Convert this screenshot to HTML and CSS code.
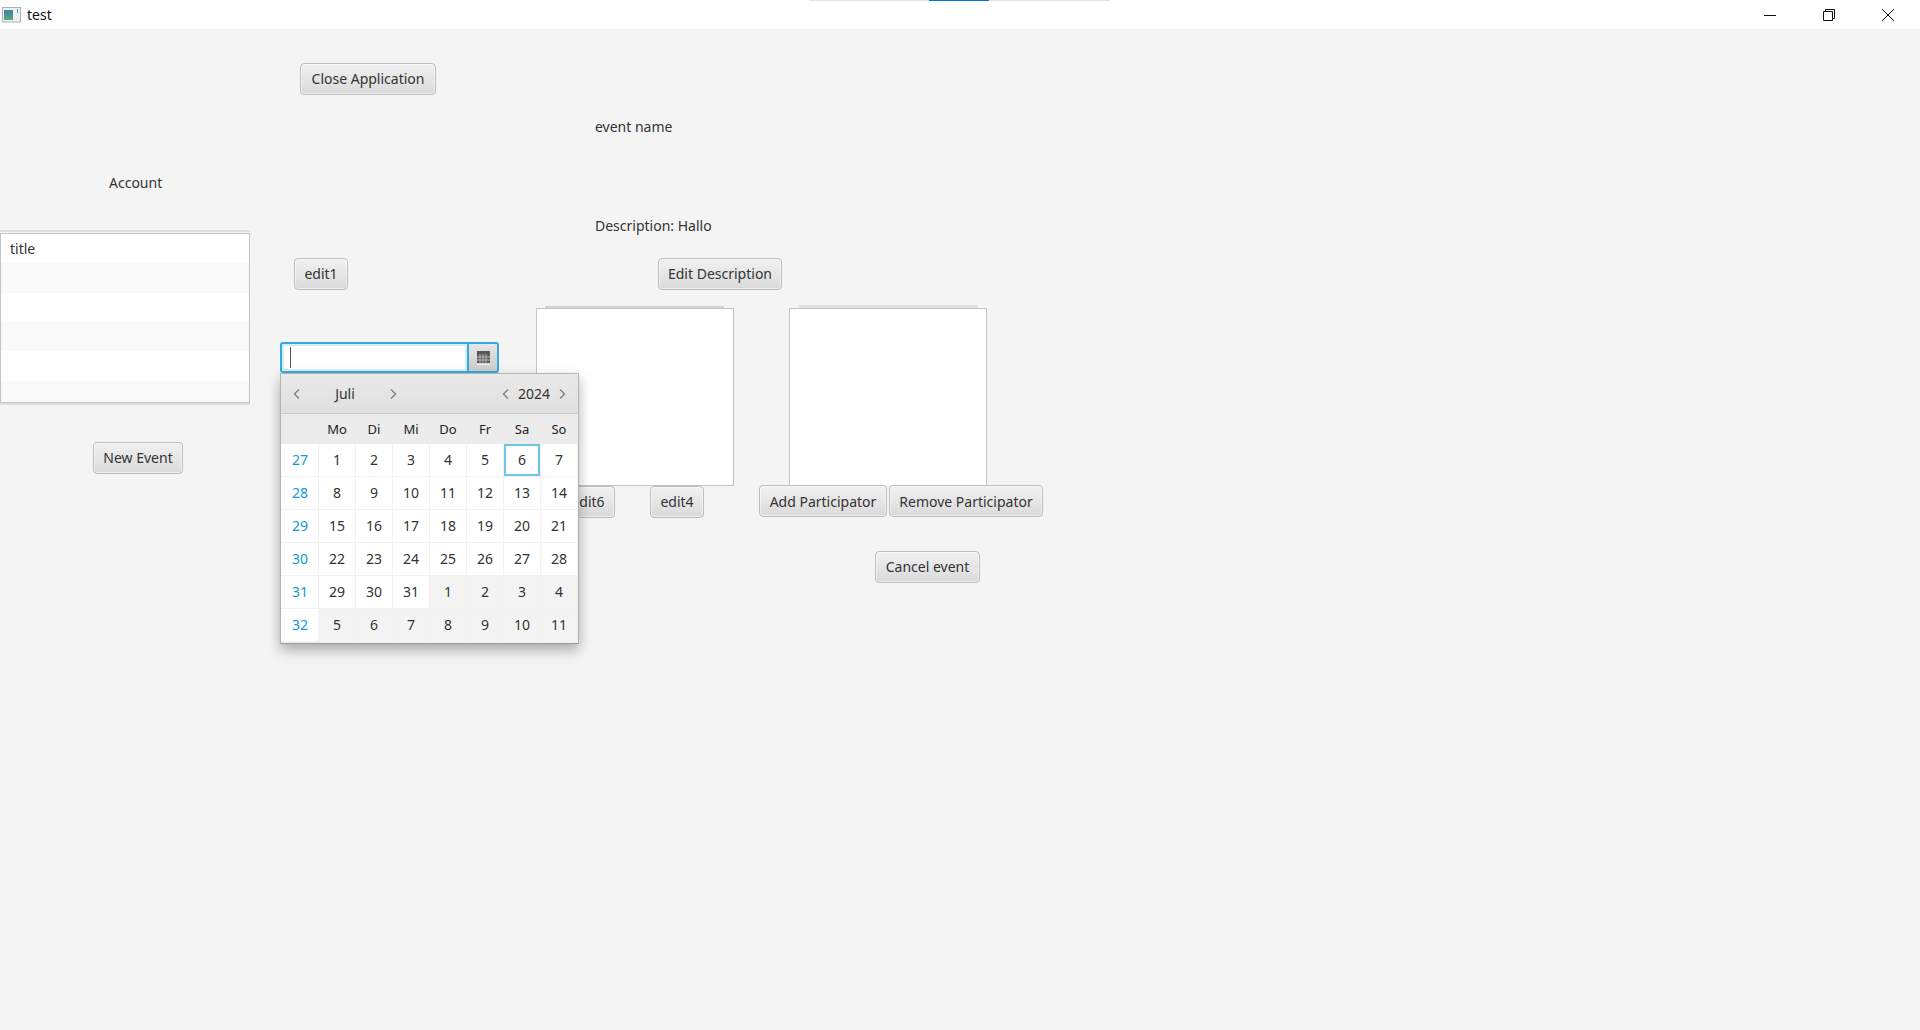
FILE: index.html
```html
<!DOCTYPE html>
<html lang="en">
<head>
    <meta charset="UTF-8">
    <meta name="viewport" content="width=device-width, initial-scale=1.0">
    <title>test</title>
    <link rel="stylesheet" href="styles.css">
</head>
<body>
    <header class="title-bar">
        <svg class="app-icon" width="20" height="16" viewBox="0 0 20 16">
            <defs>
                <linearGradient id="appFill" x1="0" y1="0" x2="0" y2="1">
                    <stop offset="0" stop-color="#3f7f9c"/>
                    <stop offset="1" stop-color="#62a886"/>
                </linearGradient>
            </defs>
            <rect x="0.5" y="0.5" width="18" height="14.5" fill="#eef1f1" stroke="#a9b2b8"/>
            <rect x="2" y="3" width="9" height="10" fill="url(#appFill)"/>
            <rect x="15" y="2" width="1" height="4" fill="#4f9fb0"/>
        </svg>
        <span class="app-title">test</span>
        <div class="window-controls">
            <button class="win-btn" type="button" aria-label="Minimize">
                <svg width="14" height="14" viewBox="0 0 14 14"><path d="M1 7.5h12" stroke="#111" fill="none"/></svg>
            </button>
            <button class="win-btn" type="button" aria-label="Restore">
                <svg width="14" height="14" viewBox="0 0 14 14"><path d="M1.5 3.5h9v9h-9zM3.5 3.5v-2h9v9h-2" stroke="#111" fill="none"/></svg>
            </button>
            <button class="win-btn" type="button" aria-label="Close">
                <svg width="14" height="14" viewBox="0 0 14 14"><path d="M1 1l12 12M13 1L1 13" stroke="#111" fill="none"/></svg>
            </button>
        </div>
        <div class="load-bar"><div class="load-bar-fill"></div></div>
    </header>

    <main class="content">
        <section class="col col-account">
            <div class="label account-label">Account</div>
            <div class="list-box">
                <ul class="list-view events-list">
                    <li>title</li>
                    <li></li>
                    <li></li>
                    <li></li>
                    <li></li>
                    <li></li>
                </ul>
            </div>
            <button class="fx-btn new-event" type="button">New Event</button>
        </section>

        <section class="col col-date">
            <button class="fx-btn close-app" type="button">Close Application</button>
            <button class="fx-btn edit1" type="button">edit1</button>
            <div class="date-picker">
                <div class="date-input"><span class="caret"></span></div>
                <div class="date-button">
                    <svg width="13" height="14" viewBox="0 0 13 14">
                        <rect x="0" y="0" width="13" height="3" fill="#555"/>
                        <rect x="0" y="3" width="13" height="9" fill="#5c5c5c"/>
                        <path d="M3 3v9M6 3v9M9 3v9M0 6h13M0 9h13" stroke="#b9b9b9" fill="none"/>
                        <rect x="0" y="13" width="13" height="1" fill="#f0f0f0"/>
                    </svg>
                </div>

                <div class="calendar">
                    <div class="cal-header">
                        <div class="spinner month-spinner">
                            <svg class="chev" width="7" height="10" viewBox="0 0 7 10"><path d="M6 .5L1.5 5 6 9.5"/></svg>
                            <span>Juli</span>
                            <svg class="chev" width="7" height="10" viewBox="0 0 7 10"><path d="M1 .5L5.500 5 1 9.500"/></svg>
                        </div>
                        <div class="spinner year-spinner">
                            <svg class="chev" width="7" height="10" viewBox="0 0 7 10"><path d="M6 .5L1.5 5 6 9.5"/></svg>
                            <span>2024</span>
                            <svg class="chev" width="7" height="10" viewBox="0 0 7 10"><path d="M1 .5L5.500 5 1 9.500"/></svg>
                        </div>
                    </div>
                    <div class="cal-grid">
                        <div class="dow"></div><div class="dow">Mo</div><div class="dow">Di</div><div class="dow">Mi</div><div class="dow">Do</div><div class="dow">Fr</div><div class="dow">Sa</div><div class="dow">So</div>

                        <div class="cell week">27</div><div class="cell">1</div><div class="cell">2</div><div class="cell">3</div><div class="cell">4</div><div class="cell">5</div><div class="cell today">6</div><div class="cell">7</div>
                        <div class="cell week">28</div><div class="cell">8</div><div class="cell">9</div><div class="cell">10</div><div class="cell">11</div><div class="cell">12</div><div class="cell">13</div><div class="cell">14</div>
                        <div class="cell week">29</div><div class="cell">15</div><div class="cell">16</div><div class="cell">17</div><div class="cell">18</div><div class="cell">19</div><div class="cell">20</div><div class="cell">21</div>
                        <div class="cell week">30</div><div class="cell">22</div><div class="cell">23</div><div class="cell">24</div><div class="cell">25</div><div class="cell">26</div><div class="cell">27</div><div class="cell">28</div>
                        <div class="cell week">31</div><div class="cell">29</div><div class="cell">30</div><div class="cell">31</div><div class="cell other">1</div><div class="cell other">2</div><div class="cell other">3</div><div class="cell other">4</div>
                        <div class="cell week">32</div><div class="cell other">5</div><div class="cell other">6</div><div class="cell other">7</div><div class="cell other">8</div><div class="cell other">9</div><div class="cell other">10</div><div class="cell other">11</div>
                    </div>
                </div>
            </div>
        </section>

        <section class="col col-event">
            <div class="label event-name">event name</div>
            <div class="label description">Description: Hallo</div>
            <button class="fx-btn edit-description" type="button">Edit Description</button>
            <div class="list-edge edge-dark"></div>
            <div class="list-view square-list"></div>
            <div class="btn-row">
                <button class="fx-btn edit6" type="button">edit6</button>
                <button class="fx-btn edit4" type="button">edit4</button>
            </div>
        </section>

        <section class="col col-people">
            <div class="list-edge edge-light"></div>
            <div class="list-view people-list"></div>
            <div class="btn-row people-buttons">
                <button class="fx-btn" type="button">Add Participator</button>
                <button class="fx-btn" type="button">Remove Participator</button>
            </div>
            <button class="fx-btn cancel-event" type="button">Cancel event</button>
        </section>
    </main>
</body>
</html>
```
FILE: styles.css
```css
* {
    box-sizing: border-box;
}

html,
body {
    height: 100%;
}

body {
    margin: 0;
    background-color: #f4f4f4;
    color: #333;
    font-family: "Noto Sans", "Open Sans", Arial, sans-serif;
    font-size: 14px;
    overflow: hidden;
}

/* window title bar */
.title-bar {
    position: relative;
    display: flex;
    align-items: center;
    height: 29px;
    background-color: #fff;
}

.app-icon {
    margin-left: 2px;
    margin-top: 1px;
}

.app-title {
    margin-left: 5px;
    color: #111;
}

.window-controls {
    display: flex;
    margin-left: auto;
    margin-right: 3px;
}

.win-btn {
    display: flex;
    align-items: center;
    justify-content: center;
    width: 59px;
    height: 29px;
    padding: 0;
    border: 0;
    background: none;
}

.load-bar {
    position: absolute;
    top: 0;
    left: 809px;
    width: 301px;
    height: 1px;
    background-color: #e2e2e2;
}

.load-bar-fill {
    width: 60px;
    height: 1px;
    margin-left: 120px;
    background-color: #0078d7;
}

/* main area, four columns */
.content {
    display: flex;
    align-items: flex-start;
    padding-top: 1px;
}

.col {
    display: flex;
    flex-direction: column;
    align-items: flex-start;
    flex: none;
}

.col-account {
    width: 280px;
}

.col-date {
    width: 256px;
}

.col-event {
    width: 223px;
}

.col-people {
    width: 300px;
    padding-top: 275px;
}

.label {
    height: 20px;
    line-height: 20px;
    white-space: nowrap;
}

.fx-btn {
    height: 32px;
    padding: 0 0 2px;
    border: 1px solid #bdbdbd;
    border-radius: 4px;
    background: linear-gradient(#f1f1f1, #dadada);
    box-shadow: inset 0 0 0 1px rgba(255, 255, 255, 0.55);
    color: #333;
    font-family: inherit;
    font-size: 14px;
    white-space: nowrap;
    cursor: pointer;
}

/* left column */
.account-label {
    margin-top: 143px;
    margin-left: 109px;
}

.list-box {
    width: 250px;
    margin-top: 37px;
    padding-top: 1px;
    border-top: 2px solid #dedede;
    border-bottom: 2px solid #dedede;
}

.list-view {
    margin: 0;
    padding: 0;
    list-style: none;
    border: 1px solid #c4c4c4;
    background-color: #fff;
}

.events-list {
    height: 170px;
    overflow: hidden;
}

.events-list li {
    height: 29.33px;
    padding-left: 9px;
    line-height: 30px;
}

.events-list li:nth-child(even) {
    background-color: #f9f9f9;
}

.new-event {
    margin-top: 37px;
    margin-left: 93px;
    width: 90px;
}

/* date column */
.close-app {
    margin-top: 33px;
    margin-left: 20px;
    width: 136px;
}

.edit1 {
    margin-top: 163px;
    margin-left: 14px;
    width: 54px;
}

.date-picker {
    position: relative;
    display: flex;
    width: 219px;
    height: 31px;
    margin-top: 52px;
}

.date-input {
    width: 187px;
    padding: 2px 0 0 8px;
    border: 2px solid #35abd9;
    border-right: 0;
    border-radius: 3px 0 0 3px;
    background-color: #fff;
    box-shadow: inset 0 0 0 2px #d3edf7;
}

.caret {
    display: block;
    width: 1px;
    height: 21px;
    margin-top: 1px;
    background-color: #555;
}

.date-button {
    display: flex;
    align-items: center;
    justify-content: center;
    width: 32px;
    border: 2px solid #35abd9;
    border-radius: 0 3px 3px 0;
    background: linear-gradient(#e6e6e6, #cbcbcb);
}

/* calendar popup, hangs over the next column */
.calendar {
    position: absolute;
    top: 31px;
    left: 0;
    z-index: 5;
    width: 299px;
    border: 1px solid #b4b4b4;
    border-bottom-color: #999;
    background-color: #f1f1f1;
    box-shadow: 0 6px 12px rgba(0, 0, 0, 0.3);
}

.cal-header {
    display: flex;
    justify-content: space-between;
    align-items: center;
    height: 40px;
    padding: 0 12px;
    border-bottom: 1px solid #cdcdcd;
    background: linear-gradient(#e9e9e9, #e0e0e0);
}

.spinner {
    display: flex;
    justify-content: space-between;
    align-items: center;
}

.month-spinner {
    width: 104px;
}

.year-spinner {
    width: 64px;
}

.chev {
    fill: none;
    stroke: #808080;
    stroke-width: 1.4;
}

.cal-grid {
    display: grid;
    grid-template-columns: 37px repeat(7, 36px);
    grid-template-rows: 29px repeat(6, 32px);
    column-gap: 1px;
    row-gap: 1px;
    height: 229px;
    background: linear-gradient(#ececec 30px, #f1f1f1 30px);
}

.dow {
    display: flex;
    align-items: center;
    justify-content: center;
    font-size: 13px;
    color: #222;
}

.cell {
    display: flex;
    align-items: center;
    justify-content: center;
    padding-bottom: 2px;
    background-color: #fff;
}

.week {
    padding-left: 1px;
    color: #0f9bd0;
}

.other {
    background-color: #f3f3f3;
}

.today {
    border: 2px solid #6fc5e6;
}

/* event column */
.event-name {
    margin-top: 87px;
    margin-left: 59px;
}

.description {
    margin-top: 79px;
    margin-left: 59px;
}

.edit-description {
    margin-top: 22px;
    margin-left: 122px;
    width: 124px;
}

.list-edge {
    flex: none;
    width: 179px;
}

.edge-dark {
    height: 2px;
    margin-top: 16px;
    margin-left: 9px;
    background-color: #d2d2d2;
}

.edge-light {
    height: 3px;
    margin-left: 40px;
    background-color: #e2e2e2;
}

.square-list {
    width: 198px;
    height: 178px;
}

.btn-row {
    display: flex;
}

.edit6 {
    margin-left: 25px;
    width: 54px;
}

.edit4 {
    margin-left: 35px;
    width: 54px;
}

/* participants column */
.people-list {
    width: 198px;
    height: 177px;
    margin-left: 30px;
    border-bottom: 0;
}

.people-buttons {
    gap: 2px;
}

.people-buttons .fx-btn {
    padding-bottom: 0;
}

.people-buttons .fx-btn:first-child {
    width: 128px;
}

.people-buttons .fx-btn:last-child {
    width: 154px;
}

.cancel-event {
    margin-top: 34px;
    margin-left: 116px;
    width: 105px;
}
```
